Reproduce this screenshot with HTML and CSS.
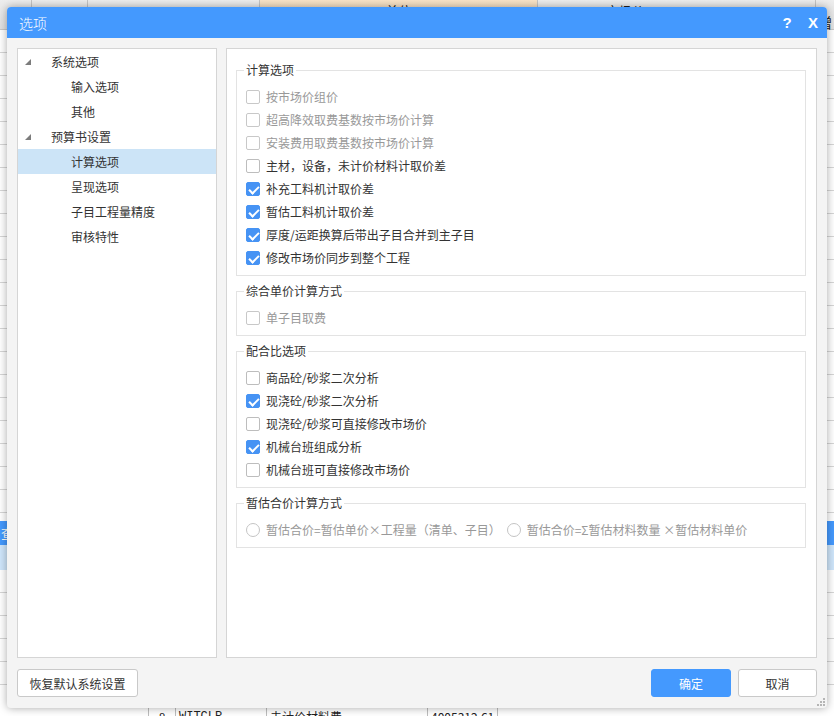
FILE: index.html
```html
<!DOCTYPE html>
<html lang="zh-CN">
<head>
<meta charset="utf-8">
<title>选项</title>
<link rel="stylesheet" href="styles.css">
</head>
<body>
<div class="app">
  <div class="app-header">
    <div class="hc c1"></div>
    <div class="hc c2"></div>
    <div class="hc c3"></div>
    <div class="hc c4">单位</div>
    <div class="hc c5">市场价</div>
    <div class="hc c6">增</div>
  </div>
  <div class="app-body">
    <div class="grid-area g1"></div>
    <div class="bg-sel">查</div>
    <div class="bg-sel2"></div>
    <div class="grid-area g2"></div>
  </div>
  <div class="app-row">
    <div class="rc r1"></div>
    <div class="rc r2">8</div>
    <div class="rc r3">WITCLR</div>
    <div class="rc r4">未计价材料费</div>
    <div class="rc r5">4005312.61</div>
    <div class="rc r6"></div>
  </div>
</div>

<div class="dialog">
  <div class="titlebar">
    <span class="title">选项</span>
    <span class="tb-btn">?</span>
    <span class="tb-btn">X</span>
  </div>
  <div class="dlg-body">
    <div class="panels">
      <div class="tree">
        <div class="node lvl1"><span class="tri"></span>系统选项</div>
        <div class="node lvl2">输入选项</div>
        <div class="node lvl2">其他</div>
        <div class="node lvl1"><span class="tri"></span>预算书设置</div>
        <div class="node lvl2 selected">计算选项</div>
        <div class="node lvl2">呈现选项</div>
        <div class="node lvl2">子目工程量精度</div>
        <div class="node lvl2">审核特性</div>
      </div>
      <div class="content">
        <fieldset class="group">
          <legend>计算选项</legend>
          <div class="opt disabled"><span class="cb"></span>按市场价组价</div>
          <div class="opt disabled"><span class="cb"></span>超高降效取费基数按市场价计算</div>
          <div class="opt disabled"><span class="cb"></span>安装费用取费基数按市场价计算</div>
          <div class="opt"><span class="cb"></span>主材，设备，未计价材料计取价差</div>
          <div class="opt"><span class="cb on"></span>补充工料机计取价差</div>
          <div class="opt"><span class="cb on"></span>暂估工料机计取价差</div>
          <div class="opt"><span class="cb on"></span>厚度/运距换算后带出子目合并到主子目</div>
          <div class="opt"><span class="cb on"></span>修改市场价同步到整个工程</div>
        </fieldset>
        <fieldset class="group">
          <legend>综合单价计算方式</legend>
          <div class="opt disabled"><span class="cb"></span>单子目取费</div>
        </fieldset>
        <fieldset class="group">
          <legend>配合比选项</legend>
          <div class="opt"><span class="cb"></span>商品砼/砂浆二次分析</div>
          <div class="opt"><span class="cb on"></span>现浇砼/砂浆二次分析</div>
          <div class="opt"><span class="cb"></span>现浇砼/砂浆可直接修改市场价</div>
          <div class="opt"><span class="cb on"></span>机械台班组成分析</div>
          <div class="opt"><span class="cb"></span>机械台班可直接修改市场价</div>
        </fieldset>
        <fieldset class="group">
          <legend>暂估合价计算方式</legend>
          <div class="opt-row disabled">
            <span class="rd"></span><span class="rd-text">暂估合价=暂估单价×工程量（清单、子目）</span>
            <span class="rd second"></span><span class="rd-text">暂估合价=Σ暂估材料数量 ×暂估材料单价</span>
          </div>
        </fieldset>
      </div>
    </div>
    <div class="footer">
      <button class="btn restore">恢复默认系统设置</button>
      <span class="spacer"></span>
      <button class="btn primary">确定</button>
      <button class="btn cancel">取消</button>
    </div>
  </div>
  <svg class="grip" width="8" height="8" viewBox="0 0 8 8">
    <rect x="6" y="0" width="2" height="2" fill="#b5b5b5"/>
    <rect x="3" y="3" width="2" height="2" fill="#b5b5b5"/>
    <rect x="6" y="3" width="2" height="2" fill="#b5b5b5"/>
    <rect x="0" y="6" width="2" height="2" fill="#b5b5b5"/>
    <rect x="3" y="6" width="2" height="2" fill="#b5b5b5"/>
    <rect x="6" y="6" width="2" height="2" fill="#b5b5b5"/>
  </svg>
</div>
</body>
</html>
```

FILE: styles.css
```css
* { box-sizing: border-box; }
html, body { margin: 0; padding: 0; }
body {
  width: 834px;
  height: 716px;
  overflow: hidden;
  position: relative;
  font-family: "Noto Sans CJK SC", "Liberation Sans", sans-serif;
  font-size: 12px;
  color: #333;
  background: #fff;
}

/* background application */
.app { display: flex; flex-direction: column; height: 716px; }
.app-header {
  display: flex;
  height: 30px;
  flex: none;
  background: linear-gradient(#eeeeee, #e0e0e0);
  border-bottom: 1px solid #c8c8c8;
}
.hc {
  border-right: 1px solid #c4c4c4;
  font-size: 13px;
  line-height: 16px;
  padding-top: 3px;
  color: #222;
}
.c1 { width: 32px; }
.c2 { width: 56px; }
.c3 { width: 172px; }
.c4 { width: 278px; background: linear-gradient(#f9e4c8, #f3d9b8); text-align: center; }
.c5 { width: 278px; padding-left: 68px; }
.c6 { flex: 1; border-right: 0; padding: 14px 0 0 2px; font-size: 14px; }

.app-body { height: 675px; flex: none; display: flex; flex-direction: column; overflow: hidden; }
.grid-area {
  background: repeating-linear-gradient(to bottom, #fff 0 22px, #d6d6d6 22px 23px);
}
.g1 { height: 491px; }
.g2 { flex: 1; }
.bg-sel {
  height: 24px;
  background: #4499fe;
  color: #fff;
  font-size: 13px;
  line-height: 24px;
  padding-left: 1px;
}
.bg-sel2 { height: 25px; background: #cfe6fb; }

.app-row { display: flex; height: 30px; flex: none; line-height: 22px; padding-top: 1px; font-size: 12px; color: #222; }
.rc { border-right: 1px solid #bdbdbd; padding: 0 3px; }
.r1 { width: 149px; }
.r2 { width: 27px; text-align: center; }
.r3 { width: 91px; font-family: "Liberation Mono", monospace; }
.r4 { width: 161px; }
.r5 { width: 70px; text-align: right; }
.r6 { flex: 1; border-right: 0; }

/* dialog */
.dialog {
  position: absolute;
  left: 7px;
  top: 7px;
  width: 820px;
  height: 701px;
  background: #f4f4f4;
  border-radius: 4px;
  box-shadow: 0 0 9px rgba(0, 0, 0, 0.35);
  display: flex;
  flex-direction: column;
  overflow: hidden;
}
.titlebar {
  height: 31px;
  flex: none;
  background: #4499fe;
  color: #fff;
  display: flex;
  align-items: center;
  padding: 0 6px 0 12px;
}
.title { flex: 1; font-size: 14px; font-weight: 300; }
.tb-btn {
  width: 16px;
  margin-left: 10px;
  text-align: center;
  font-family: "Liberation Sans", sans-serif;
  font-weight: bold;
  font-size: 15px;
}

.dlg-body {
  flex: 1;
  display: flex;
  flex-direction: column;
  padding: 10px 10px 11px 10px;
}
.panels { display: flex; gap: 9px; height: 610px; flex: none; }
.tree {
  width: 200px;
  background: #fff;
  border: 1px solid #d5d5d5;
}
.node {
  height: 25px;
  display: flex;
  align-items: center;
  white-space: nowrap;
}
.lvl1 { padding-left: 7px; }
.lvl2 { padding-left: 53px; }
.selected { background: #cce4f7; }
.tri {
  width: 0;
  height: 0;
  border-left: 6px solid transparent;
  border-bottom: 6px solid #7c7c7c;
  margin-right: 20px;
  margin-top: 1px;
}

.content {
  flex: 1;
  background: #fff;
  border: 1px solid #d5d5d5;
  padding: 12px 10px 0 9px;
}
.group {
  margin: 0 0 6px 0;
  border: 1px solid #e3e3e3;
  padding: 6px 9px 6px 9px;
  min-width: 0;
}
.group legend {
  padding: 0 2px;
  margin-left: -2px;
  line-height: 18px;
  font-size: 12px;
  color: #333;
}
.opt {
  display: flex;
  align-items: center;
  height: 23px;
  white-space: nowrap;
}
.cb {
  width: 14px;
  height: 14px;
  border: 1px solid #bdbdbd;
  border-radius: 2px;
  background: #fff;
  margin-right: 6px;
  position: relative;
  flex: none;
}
.cb.on { background: #4693f4; border-color: #4693f4; }
.cb.on::after {
  content: "";
  position: absolute;
  left: 4px;
  top: 1px;
  width: 4px;
  height: 8px;
  border: solid #fff;
  border-width: 0 2px 2px 0;
  transform: rotate(45deg);
}
.disabled { color: #999; }
.disabled .cb { border-color: #c8c8c8; }

.opt-row {
  display: flex;
  align-items: center;
  height: 23px;
  white-space: nowrap;
}
.rd {
  width: 14px;
  height: 14px;
  border: 1px solid #c4c4c4;
  border-radius: 50%;
  background: #fff;
  margin-right: 6px;
  flex: none;
}
.rd.second { margin-left: 6px; }

.footer {
  display: flex;
  gap: 7px;
  margin-top: 11px;
  height: 28px;
}
.spacer { flex: 1; }
.btn {
  height: 28px;
  border: 1px solid #c9c9c9;
  border-radius: 3px;
  background: #fff;
  font-family: inherit;
  font-size: 12px;
  color: #333;
  padding: 0;
}
.restore { width: 121px; }
.primary { width: 80px; background: #4499fe; border-color: #4499fe; color: #fff; }
.cancel { width: 79px; }

.grip {
  position: absolute;
  right: 2px;
  bottom: 2px;
}
```
